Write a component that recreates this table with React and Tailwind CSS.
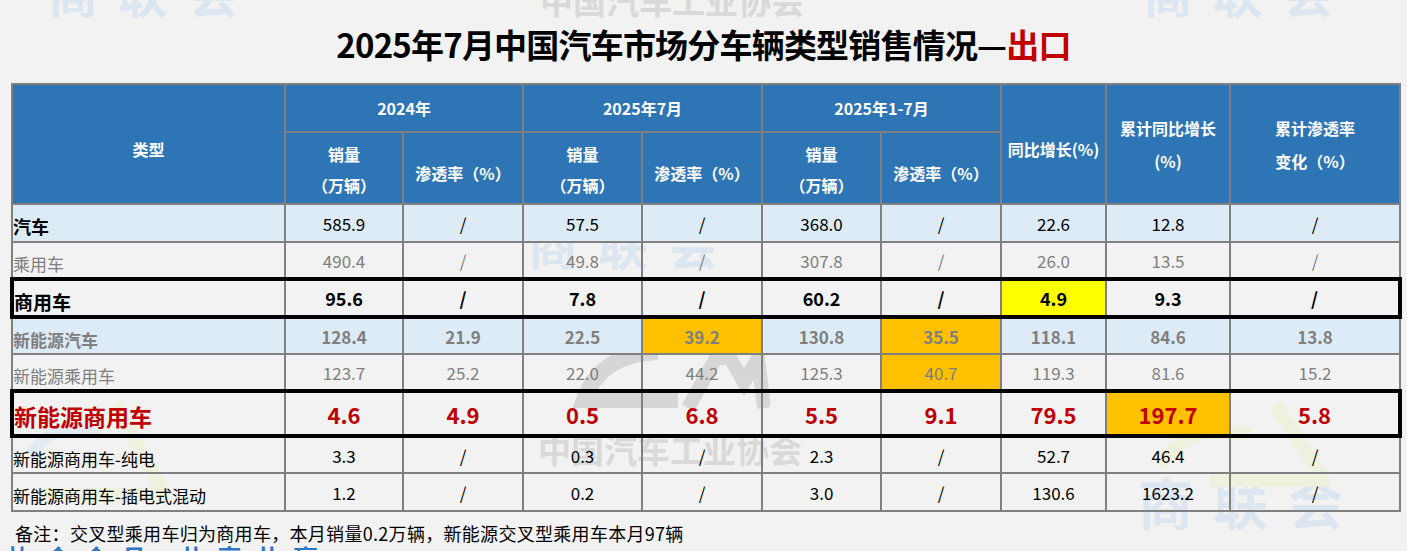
import React from "react";

const F = "font-['Noto_Sans_CJK_SC','Noto_Sans',sans-serif]";

const rows = [
  {
    label: "汽车",
    labelCls: "font-bold text-black text-[18px]",
    bg: "bg-[#DDEBF7]",
    cls: "text-black font-normal text-[17px]",
    h: "h-[38px]",
    cells: ["585.9", "/", "57.5", "/", "368.0", "/", "22.6", "12.8", "/"],
  },
  {
    label: "乘用车",
    labelCls: "font-normal text-[#7F7F7F] text-[17px]",
    bg: "",
    cls: "text-[#7F7F7F] font-normal text-[17px]",
    h: "h-[37px]",
    cells: ["490.4", "/", "49.8", "/", "307.8", "/", "26.0", "13.5", "/"],
  },
  {
    label: "商用车",
    labelCls: "font-bold text-black text-[19px]",
    bg: "",
    cls: "text-black font-bold text-[18px]",
    h: "h-[38px]",
    thick: true,
    cells: ["95.6", "/", "7.8", "/", "60.2", "/", { v: "4.9", hl: "bg-[#FFFF00]" }, "9.3", "/"],
  },
  {
    label: "新能源汽车",
    labelCls: "font-bold text-[#7F7F7F] text-[17px]",
    bg: "bg-[#DDEBF7]",
    cls: "text-[#7F7F7F] font-bold text-[17px]",
    h: "h-[37px]",
    cells: ["128.4", "21.9", "22.5", { v: "39.2", hl: "bg-[#FFC000]" }, "130.8", { v: "35.5", hl: "bg-[#FFC000]" }, "118.1", "84.6", "13.8"],
  },
  {
    label: "新能源乘用车",
    labelCls: "font-normal text-[#7F7F7F] text-[17px]",
    bg: "",
    cls: "text-[#7F7F7F] font-normal text-[17px]",
    h: "h-[37px]",
    cells: [
      "123.7",
      "25.2",
      { v: "22.0", b: true },
      { v: "44.2", b: true },
      { v: "125.3", b: true },
      { v: "40.7", b: true, hl: "bg-[#FFC000]" },
      "119.3",
      "81.6",
      { v: "15.2", b: true },
    ],
  },
  {
    label: "新能源商用车",
    labelCls: "font-bold text-[#C00000] text-[23px]",
    bg: "",
    cls: "text-[#C00000] font-bold text-[22px]",
    h: "h-[45px]",
    thick: true,
    cells: ["4.6", "4.9", "0.5", "6.8", "5.5", "9.1", "79.5", { v: "197.7", hl: "bg-[#FFC000]" }, "5.8"],
  },
  {
    label: "新能源商用车-纯电",
    labelCls: "font-normal text-black text-[17px]",
    bg: "",
    cls: "text-black font-normal text-[17px]",
    h: "h-[37px]",
    cells: ["3.3", "/", "0.3", "/", "2.3", "/", "52.7", "46.4", "/"],
  },
  {
    label: "新能源商用车-插电式混动",
    labelCls: "font-normal text-black text-[17px]",
    bg: "",
    cls: "text-black font-normal text-[17px]",
    h: "h-[38px]",
    cells: ["1.2", "/", "0.2", "/", "3.0", "/", "130.6", "1623.2", "/"],
  },
];

const widths = [273, 118, 120, 119, 120, 119, 120, 105, 124, 170];

function Watermarks() {
  const slc = "absolute font-bold text-[#DCE6F0] text-[50px] leading-none tracking-[20px] whitespace-nowrap";
  const cn = "absolute text-[#D9D9D9] text-[33px] leading-none whitespace-nowrap font-bold";
  return (
    <div className="absolute inset-0 pointer-events-none select-none">
      <div className={`${slc} left-[48px] top-[-34px]`}>商联会</div>
      <div className={`${slc} left-[1143px] top-[-34px]`}>商联会</div>
      <div className={`${slc} left-[528px] top-[218px]`}>商联会</div>
      <div className={`${slc} left-[1138px] top-[473px] text-[55px]`}>商联会</div>
      <div className={`${cn} left-[540px] top-[-16px]`}>中国汽车工业协会</div>
      <div className={`${cn} left-[538px] top-[433px]`}>中国汽车工业协会</div>
      <svg className="absolute left-[550px] top-[330px]" width="220" height="90" viewBox="0 0 220 90">
        <path d="M108 22 Q50 24 34 70 L128 70" fill="none" stroke="#D6D6D6" strokeWidth="16" />
        <path d="M138 78 L166 28 L180 28 L194 52 L208 28 L214 78" fill="none" stroke="#D6D6D6" strokeWidth="14" strokeLinejoin="miter" />
      </svg>
      <svg className="absolute left-[20px] top-[395px]" width="150" height="110" viewBox="0 0 150 110">
        <path d="M95 10 L145 100 L20 100" fill="none" stroke="#EEF1DE" strokeWidth="14" />
        <path d="M10 60 Q40 20 80 40" fill="none" stroke="#E3EBF2" strokeWidth="12" />
      </svg>
      <svg className="absolute left-[1150px] top-[395px]" width="180" height="110" viewBox="0 0 180 110">
        <path d="M125 10 L175 85 L60 85" fill="none" stroke="#EEF1DE" strokeWidth="14" />
        <path d="M10 70 Q40 25 100 40" fill="none" stroke="#EEF1DE" strokeWidth="14" />
      </svg>
    </div>
  );
}

export default function App() {
  const hb = "border-2 border-[#808080] bg-[#2E75B6] text-white font-bold text-[16px] text-center align-middle";
  return (
    <div className={`relative w-[1407px] h-[551px] overflow-hidden bg-[#F2F2F2] ${F}`}>
      <Watermarks />
      <div className="relative">
        <div className="h-[83px] flex items-center justify-center pt-[6px]">
          <h1 className="text-[33px] font-bold leading-none text-black tracking-[-0.8px]">
            2025年7月中国汽车市场分车辆类型销售情况—<span className="text-[#C00000]">出口</span>
          </h1>
        </div>
        <table className="ml-[10px] table-fixed border-collapse w-[1390px]">
          <colgroup>
            {widths.map((w, i) => (
              <col key={i} style={{ width: w }} />
            ))}
          </colgroup>
          <thead>
            <tr className="h-[48px]">
              <th rowSpan={2} className={`${hb} pt-[10px]`}>类型</th>
              <th colSpan={2} className={hb}>2024年</th>
              <th colSpan={2} className={hb}>2025年7月</th>
              <th colSpan={2} className={hb}>2025年1-7月</th>
              <th rowSpan={2} className={`${hb} pt-[10px] px-0 whitespace-nowrap`}>同比增长(%)</th>
              <th rowSpan={2} className={`${hb} leading-[33px] pt-[2px]`}>
                累计同比增长
                <br />
                (%)
              </th>
              <th rowSpan={2} className={`${hb} leading-[33px] pt-[2px]`}>
                累计渗透率
                <br />
                变化（%）
              </th>
            </tr>
            <tr className="h-[72px]">
              {[0, 1, 2].map((i) => (
                <React.Fragment key={i}>
                  <th className={`${hb} leading-[31px] pt-[4px]`}>
                    销量
                    <br />
                    （万辆）
                  </th>
                  <th className={`${hb} pt-[10px] whitespace-nowrap`}>渗透率（%）</th>
                </React.Fragment>
              ))}
            </tr>
          </thead>
          <tbody>
            {rows.map((r, ri) => {
              const yb = r.thick ? "border-y-4 border-y-black" : "border-y-2 border-y-[#808080]";
              return (
                <tr key={ri} className={`${r.h} ${r.bg}`}>
                  <td
                    className={`${yb} border-r-2 border-r-[#808080] ${
                      r.thick ? "border-l-4 border-l-black" : "border-l-2 border-l-[#808080]"
                    } ${r.labelCls} pl-0 pt-[6px] leading-none whitespace-nowrap align-middle`}
                  >
                    {r.label}
                  </td>
                  {r.cells.map((c, ci) => {
                    const o = typeof c === "string" ? { v: c } : c;
                    const last = ci === r.cells.length - 1;
                    return (
                      <td
                        key={ci}
                        className={`${yb} border-l-2 border-l-[#808080] ${
                          last && r.thick ? "border-r-4 border-r-black" : "border-r-2 border-r-[#808080]"
                        } ${r.cls} ${o.b ? "font-bold" : ""} ${o.hl || ""} text-center leading-none align-middle`}
                      >
                        {o.v}
                      </td>
                    );
                  })}
                </tr>
              );
            })}
          </tbody>
        </table>
        <div className="pl-[15px] pt-[12px] text-[18px] leading-none text-black tracking-[0.3px] whitespace-nowrap">
          备注：交叉型乘用车归为商用车，本月销量0.2万辆，新能源交叉型乘用车本月97辆
        </div>
        <div className="pl-[8px] pt-[3px] text-[24px] leading-none font-bold text-[#2F75C6] tracking-[14px] whitespace-nowrap">
          协会会员 共享共赢
        </div>
      </div>
    </div>
  );
}
